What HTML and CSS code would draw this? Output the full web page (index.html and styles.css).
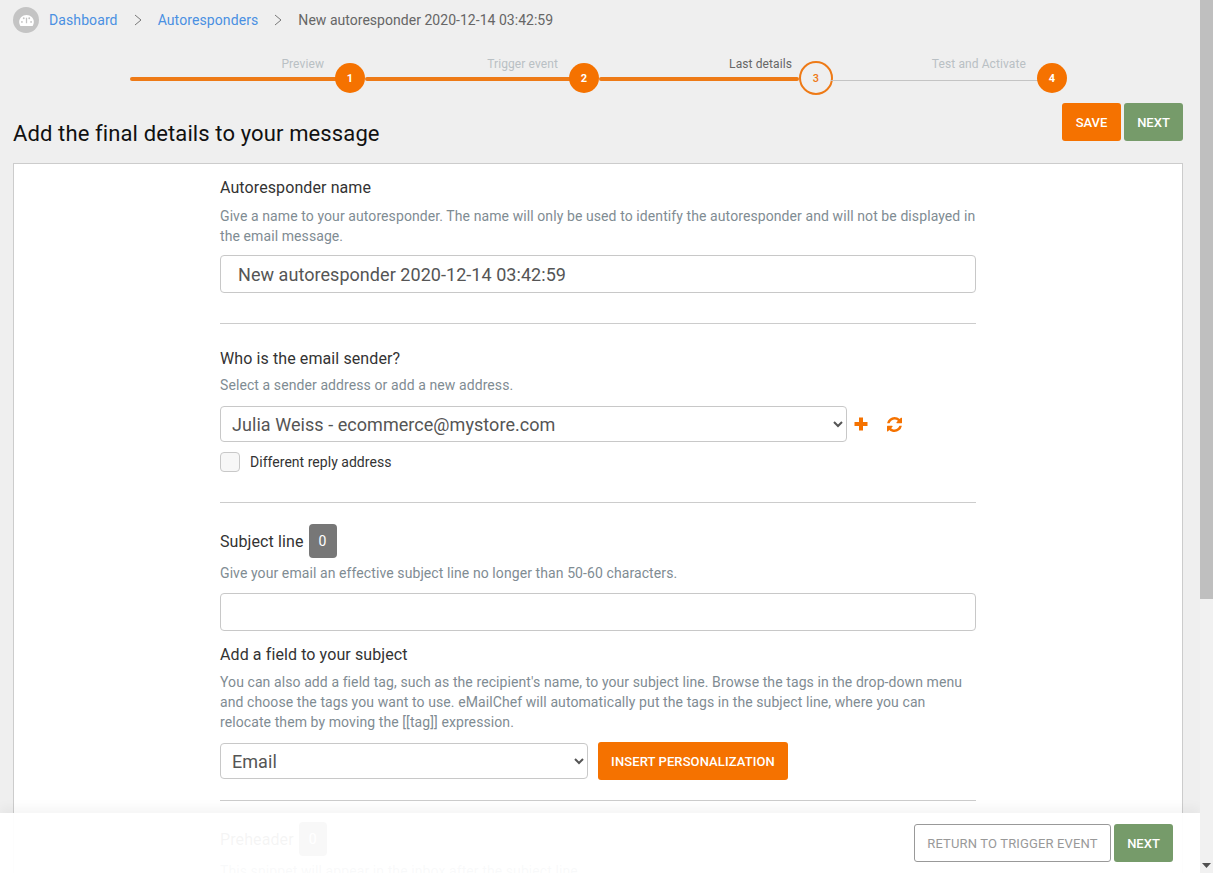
FILE: index.html
```html
<!DOCTYPE html>
<html lang="en">
<head>
<meta charset="utf-8">
<title>New autoresponder</title>
<link rel="stylesheet" href="styles.css">
</head>
<body>
<div class="viewport">
  <main class="page">
    <nav class="crumbs">
      <span class="crumb-icon">
        <svg width="15" height="11" viewBox="0 0 16 12"><path fill="#fff" d="M8 0C3.6 0 0 3.4 0 7.6c0 1.600.5 3 1.300 4.400h13.400c.8-1.400 1.300-2.800 1.300-4.400C16 3.400 12.400 0 8 0z"/><circle cx="3" cy="7.500" r="1" fill="#c4c4c4"/><circle cx="5" cy="3.500" r="1" fill="#c4c4c4"/><circle cx="11" cy="3.500" r="1" fill="#c4c4c4"/><circle cx="13" cy="7.500" r="1" fill="#c4c4c4"/><path stroke="#c4c4c4" stroke-width="1.400" d="M8 3v6"/></svg>
      </span>
      <a class="crumb-link">Dashboard</a>
      <svg class="chev" width="8" height="12" viewBox="0 0 8 12"><path fill="none" stroke="#777" d="M1 1l6 5-6 5"/></svg>
      <a class="crumb-link">Autoresponders</a>
      <svg class="chev" width="8" height="12" viewBox="0 0 8 12"><path fill="none" stroke="#777" d="M1 1l6 5-6 5"/></svg>
      <span class="crumb-current">New autoresponder 2020-12-14 03:42:59</span>
    </nav>

    <div class="stepper">
      <div class="step done first"><span class="step-label">Preview</span><span class="dot">1</span></div>
      <div class="step done"><span class="step-label">Trigger event</span><span class="dot">2</span></div>
      <div class="step done current"><span class="step-label">Last details</span><span class="dot">3</span></div>
      <div class="step todo"><span class="step-label">Test and Activate</span><span class="dot">4</span></div>
    </div>

    <header class="title-row">
      <h1>Add the final details to your message</h1>
      <div class="actions">
        <button class="btn orange save">SAVE</button>
        <button class="btn green next-top">NEXT</button>
      </div>
    </header>

    <section class="card">
      <div class="form">
        <div class="block name">
          <h2>Autoresponder name</h2>
          <p class="help">Give a name to your autoresponder. The name will only be used to identify the autoresponder and will not be displayed in the email message.</p>
          <input class="input name-input" type="text" value="New autoresponder 2020-12-14 03:42:59">
        </div>
        <hr>
        <div class="block sender">
          <h2>Who is the email sender?</h2>
          <p class="help">Select a sender address or add a new address.</p>
          <div class="sender-row">
            <select class="select sender-select"><option>Julia Weiss - ecommerce@mystore.com</option></select>
            <svg class="tool plus" width="14" height="14" viewBox="0 0 14 14"><path fill="#f57200" d="M5 .5h4V5h4.500v4H9v4.500H5V9H.5V5H5z"/></svg>
            <svg class="tool refresh" width="15" height="15" viewBox="128 128 1536 1536"><path fill="#f57200" d="M1639 1056q0 5-1 7-64 268-268 434.500t-478 166.500q-146 0-282.500-55t-243.500-157l-129 129q-19 19-45 19t-45-19-19-45v-448q0-26 19-45t45-19h448q26 0 45 19t19 45-19 45l-137 137q71 66 161 102t187 36q134 0 250-65t186-179q11-17 53-117 8-23 30-23h192q13 0 22.500 9.500t9.500 22.500zm25-800v448q0 26-19 45t-45 19h-448q-26 0-45-19t-19-45 19-45l138-138q-148-137-349-137-134 0-250 65t-186 179q-11 17-53 117-8 23-30 23h-199q-13 0-22.500-9.500t-9.500-22.500v-7q65-268 270-434.500t480-166.500q146 0 284 55.500t245 156.500l130-129q19-19 45-19t45 19 19 45z"/></svg>
          </div>
          <label class="check"><span class="box"></span>Different reply address</label>
        </div>
        <hr>
        <div class="block subject">
          <h2 class="counter-head"><span class="counter-label">Subject line</span> <span class="count">0</span></h2>
          <p class="help">Give your email an effective subject line no longer than 50-60 characters.</p>
          <input class="input subject-input" type="text">
          <h2 class="field-head">Add a field to your subject</h2>
          <p class="help">You can also add a field tag, such as the recipient's name, to your subject line. Browse the tags in the drop-down menu and choose the tags you want to use. eMailChef will automatically put the tags in the subject line, where you can relocate them by moving the [[tag]] expression.</p>
          <div class="field-row">
            <select class="select field-select"><option>Email</option></select>
            <button class="btn orange insert">INSERT PERSONALIZATION</button>
          </div>
        </div>
        <hr>
        <div class="block preheader">
          <h2 class="counter-head"><span class="counter-label">Preheader</span> <span class="count">0</span></h2>
          <p class="help">This snippet will appear in the inbox after the subject line.</p>
        </div>
      </div>
    </section>
  </main>

  <footer class="bottom-bar">
    <button class="btn outline">RETURN TO TRIGGER EVENT</button>
    <button class="btn green">NEXT</button>
  </footer>

  <div class="scrollbar">
    <div class="thumb"></div>
    <svg class="arrow" width="9" height="5" viewBox="0 0 9 5"><path fill="#505050" d="M0 0h9L4.500 5z"/></svg>
  </div>
</div>
</body>
</html>
```

FILE: styles.css
```css
* { box-sizing: border-box; }
html, body { margin: 0; height: 100%; overflow: hidden; }
body { font-family: Roboto, "Liberation Sans", sans-serif; color: #333; background: #efefef; }
.viewport { position: relative; width: 1213px; height: 873px; overflow: hidden; }
.page { width: 1200px; padding: 0 17px 0 13px; }

.crumbs { display: flex; align-items: center; height: 40px; font-size: 14px; }
.crumb-icon { width: 26px; height: 26px; border-radius: 50%; background: #c4c4c4; display: flex; align-items: center; justify-content: center; margin-right: 10px; }
.crumb-link { color: #4a90e2; letter-spacing: .1px; }
.chev { margin: 0 16px; }
.crumb-current { color: #666; letter-spacing: .03px; }

.stepper { display: flex; height: 63px; margin-left: 117px; width: 937px; }
.step { position: relative; height: 63px; flex: none; }
.step.first { width: 235px; }
.step:nth-child(2) { width: 234px; }
.step:nth-child(3) { width: 232px; }
.step:nth-child(4) { width: 236px; }
.step::before { content: ""; position: absolute; left: 0; right: 15px; top: 37px; height: 4px; background: #ee7a16; border-radius: 2px; }
.step.todo::before { height: 1px; top: 40px; background: #c4c4c4; }
.step-label { position: absolute; right: 41px; top: 16px; font-size: 12px; line-height: 16px; letter-spacing: .1px; color: #b9c0c4; white-space: nowrap; }
.current .step-label { color: #666; right: 39px; }
.dot { position: absolute; right: 0; top: 23px; width: 30px; height: 30px; border-radius: 50%; background: #f57200; color: #fff; font-size: 11px; font-weight: 700; display: flex; align-items: center; justify-content: center; }
.current .dot { right: -2px; top: 21px; width: 34px; height: 34px; background: #efefef; border: 2px solid #ee7a16; color: #ee7a16; font-weight: 500; }
.current::before { right: 32px; }

.title-row { display: flex; justify-content: space-between; height: 60px; position: relative; }
.title-row h1 { margin: 17px 0 0; font-size: 22px; font-weight: 400; line-height: 28px; color: #111; letter-spacing: .12px; }
.actions { display: flex; gap: 3px; height: 38px; }

.btn { font-family: Roboto, "Liberation Sans", sans-serif; font-size: 13px; font-weight: 500; height: 38px; padding: 0; border-radius: 3px; border: 1px solid transparent; color: #fff; }
.orange { background: #f57200; }
.green { background: #769b6a; width: 59px; }
.save { width: 59px; }
.outline { width: 197px; background: #fff; border-color: #999; color: #999; font-weight: 400; letter-spacing: .15px; }

.card { background: #fff; border: 1px solid #ccc; height: 760px; }
.form { width: 756px; margin-left: 206px; }
.block h2 { margin: 0; font-size: 16px; font-weight: 400; line-height: 22px; color: #333; letter-spacing: .1px; }
.help { margin: 0; font-size: 14px; line-height: 20px; letter-spacing: .09px; color: #7f8c93; }
.name { padding-top: 13px; height: 159px; }
.name .help { margin-top: 7px; }
.input { display: block; width: 100%; height: 38px; border: 1px solid #c8c8c8; border-radius: 4px; background: #fff; padding: 0 17px; font-family: inherit; font-size: 18px; letter-spacing: .05px; color: #555; }
.name-input { margin-top: 9px; }
hr { margin: 0; border: 0; border-top: 1px solid #ccc; }
.sender { height: 178px; padding-top: 24px; }
.sender .help { margin-top: 5px; }
.sender-row { display: flex; align-items: center; margin-top: 11px; }
.select { height: 36px; border: 1px solid #c8c8c8; border-radius: 4px; background: #fff; font-family: inherit; font-size: 18px; letter-spacing: .05px; color: #555; padding: 0 7px; }
.sender-select { width: 627px; }
.tool { flex: none; }
.plus { margin-left: 7px; }
.refresh { margin-left: 19px; }
.check { display: flex; align-items: center; font-size: 14px; letter-spacing: .03px; color: #333; margin-top: 9px; height: 21px; }
.box { width: 20px; height: 20px; border: 1px solid #c8c8c8; border-radius: 4px; background: #f7f7f7; margin-right: 10px; }
.subject { height: 297px; padding-top: 21px; }
.counter-head { display: flex; align-items: center; gap: 5px; height: 34px; }
.counter-label { padding-top: 2px; }
.count { width: 28px; height: 34px; background: #777; color: #fff; border-radius: 4px; font-size: 14px; display: flex; align-items: center; justify-content: center; }
.subject .help { margin-top: 5px; }
.subject-input { margin-top: 10px; }
.block .field-head { margin-top: 13px; }
.subject .field-head + .help { margin-top: 6px; }
.field-row { display: flex; align-items: center; gap: 10px; margin-top: 10px; }
.field-select { width: 368px; }
.insert { width: 190px; letter-spacing: .1px; }
.preheader { padding-top: 21px; }
.preheader .help { margin-top: 5px; }

.bottom-bar { position: absolute; left: 0; bottom: 0; width: 1200px; height: 60px; padding: 11px 27px 0 0; display: flex; justify-content: flex-end; align-items: flex-start; gap: 3px; background: rgba(255,255,255,.95); box-shadow: 0 -6px 10px rgba(0,0,0,.04); }

.scrollbar { position: absolute; top: 0; right: 0; width: 13px; height: 873px; background: #f1f1f1; }
.thumb { width: 13px; height: 599px; background: #bfbfbf; }
.arrow { position: absolute; left: 2px; bottom: 5px; }
```
